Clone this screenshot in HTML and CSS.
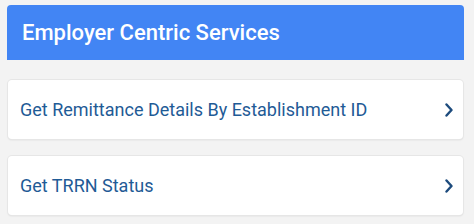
FILE: index.html
```html
<!DOCTYPE html>
<html>
<head>
<meta charset="utf-8">
<link rel="stylesheet" href="styles.css">
</head>
<body>
<div class="page">
  <div class="header">Employer Centric Services</div>
  <div class="list">
    <div class="card">
      <span class="label">Get Remittance Details By Establishment ID</span>
      <svg class="chev" width="8" height="14" viewBox="0 0 8 14"><path d="M1.5 1.5 L6.5 7 L1.5 12.5" fill="none" stroke="#1d4b7d" stroke-width="2.4" stroke-linecap="round" stroke-linejoin="round"/></svg>
    </div>
    <div class="card">
      <span class="label">Get TRRN Status</span>
      <svg class="chev" width="8" height="14" viewBox="0 0 8 14"><path d="M1.5 1.5 L6.5 7 L1.5 12.5" fill="none" stroke="#1d4b7d" stroke-width="2.4" stroke-linecap="round" stroke-linejoin="round"/></svg>
    </div>
  </div>
</div>
</body>
</html>
```

FILE: styles.css
```css
html, body {
  margin: 0;
  padding: 0;
  background: #f3f3f3;
  width: 474px;
  height: 224px;
  overflow: hidden;
  font-family: Roboto, "Liberation Sans", sans-serif;
}
.page {
  padding: 5px 10px 0 7px;
}
.header {
  background: #4285f4;
  color: #ffffff;
  height: 55px;
  border-radius: 4px 4px 0 0;
  font-size: 22px;
  font-weight: 500;
  display: flex;
  align-items: center;
  padding-left: 15px;
  padding-bottom: 1px;
  box-sizing: border-box;
}
.list {
  display: flex;
  flex-direction: column;
  gap: 17px;
  padding: 20px 1px 0 1px;
}
.card {
  background: #ffffff;
  height: 59px;
  border-radius: 4px;
  box-shadow: 0 0 0 1px #e6e6e6, 0 1px 2px rgba(0,0,0,0.12);
  display: flex;
  align-items: center;
  justify-content: space-between;
  padding: 0 10px 0 12px;
  box-sizing: border-box;
}
.label {
  color: #1f5b96;
  font-size: 18px;
}
.chev {
  display: block;
}
```
